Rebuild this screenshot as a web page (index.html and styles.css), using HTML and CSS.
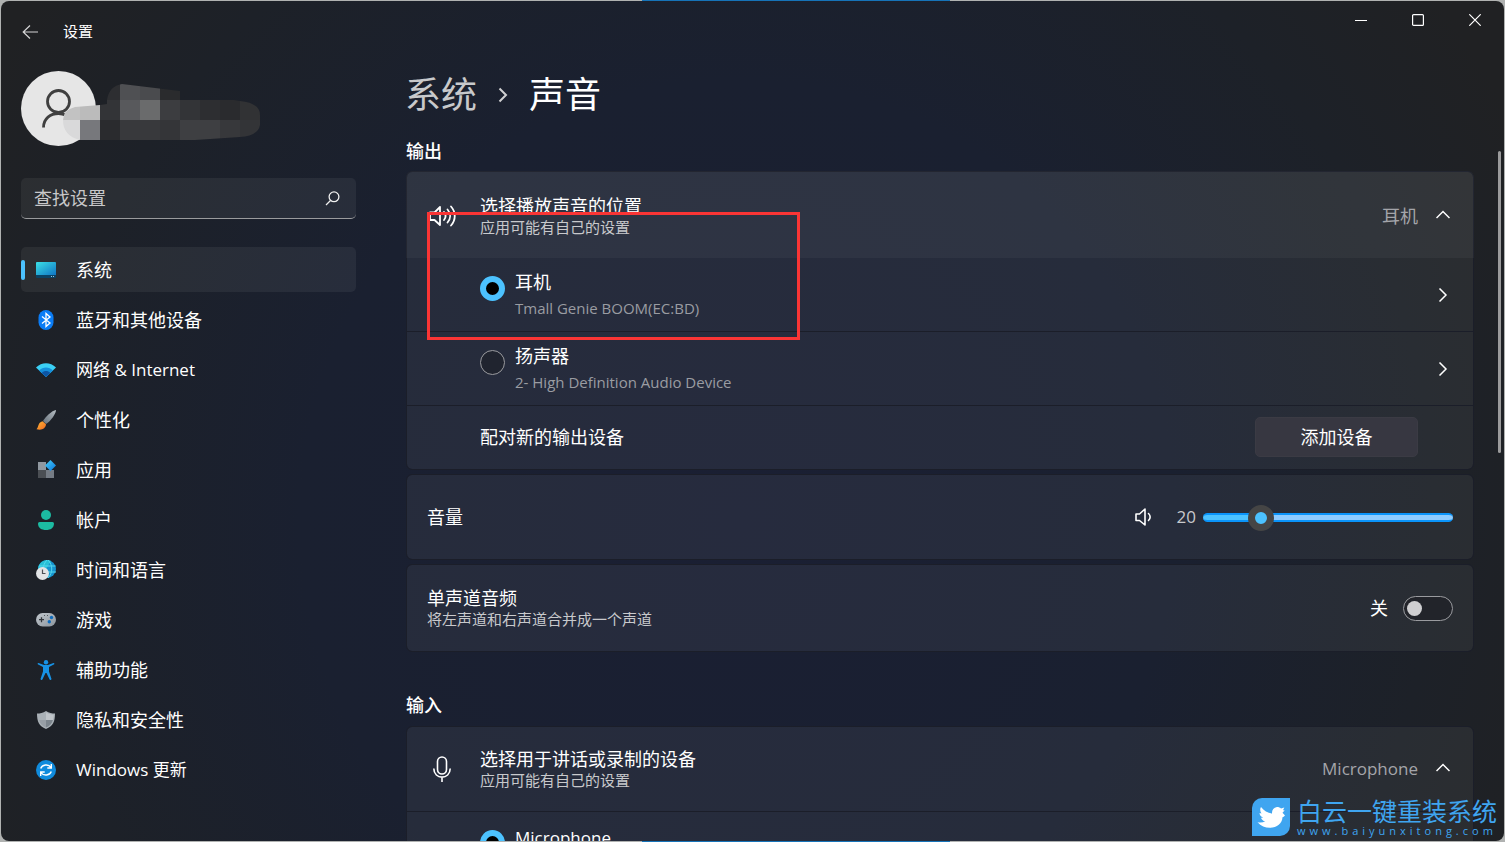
FILE: index.html
```html
<!DOCTYPE html>
<html lang="zh-CN">
<head>
<meta charset="utf-8">
<meta name="viewport" content="width=device-width, initial-scale=1">
<title>设置</title>
<link rel="stylesheet" href="styles.css">
</head>
<body>
<div class="window">
  <header class="titlebar">
    <button class="back" type="button" aria-label="返回">
      <svg width="17" height="16" viewBox="0 0 17 16" fill="none" stroke="#d4d4d5" stroke-width="1.2"><path d="M16 8H1M8 1.5 1.200 8 8 14.500"/></svg>
    </button>
    <span class="app-name">设置</span>
    <div class="controls">
      <button type="button" aria-label="最小化"><svg width="12" height="12" viewBox="0 0 12 12" stroke="#fff"><path d="M0 6.500h12"/></svg></button>
      <button type="button" aria-label="最大化"><svg width="12" height="12" viewBox="0 0 12 12" fill="none" stroke="#fff" stroke-width="1.200"><rect x=".6" y=".6" width="10.800" height="10.800" rx="1"/></svg></button>
      <button type="button" aria-label="关闭"><svg width="12" height="12" viewBox="0 0 12 12" stroke="#fff" stroke-width="1.200"><path d="m.3.3 11.400 11.400M11.700.3.3 11.700"/></svg></button>
    </div>
  </header>

  <div class="layout">
    <aside class="sidebar">
      <div class="user">
        <svg width="240" height="75" viewBox="21 71 240 75">
          <defs><clipPath id="name-mask"><path d="M107 104v-4q2-14 15-16l58 7 60 10q20 2 20 14v10q-2 11-20 12l-45 3H80q-17-4-17-20 0-10 12-13l25-2z"/></clipPath></defs>
          <circle cx="58.500" cy="108.500" r="37.500" fill="#e6e6e6"/>
          <g fill="none" stroke="#3f3f3f" stroke-width="2.800"><circle cx="58.500" cy="101.500" r="11"/><path d="M43.500 127.500c0-9 7-14 15-14 3 0 5 .6 8 2"/></g>
          <g clip-path="url(#name-mask)" shape-rendering="crispEdges">
            <path fill="#2d2e31" d="M100 80h20v20h-20z"/><path fill="#4f5053" d="M120 80h20v20h-20z"/><path fill="#4a4b4e" d="M140 80h20v20h-20z"/><path fill="#2a2b2d" d="M160 80h20v20h-20z"/>
            <path fill="#c2c2c2" d="M60 100h20v20H60z"/><path fill="#bbb" d="M80 100h20v20H80z"/><path fill="#333437" d="M100 100h20v20h-20z"/><path fill="#58595c" d="M120 100h20v20h-20z"/><path fill="#6a6b6c" d="M140 100h20v20h-20z"/><path fill="#3c3d40" d="M160 100h20v20h-20z"/><path fill="#333437" d="M180 100h20v20h-20z"/><path fill="#2d2e31" d="M200 100h20v20h-20z"/><path fill="#2a2b2e" d="M220 100h20v20h-20z"/><path fill="#313234" d="M240 100h20v20h-20z"/>
            <path fill="#d9d9da" d="M60 120h20v20H60z"/><path fill="#77787c" d="M80 120h20v20H80z"/><path fill="#2a2b2e" d="M100 120h20v20h-20z"/><path fill="#38393c" d="M120 120h40v20h-40z"/><path fill="#343538" d="M160 120h20v20h-20z"/><path fill="#3e3f42" d="M180 120h40v20h-40z"/><path fill="#37383b" d="M220 120h20v20h-20z"/><path fill="#333437" d="M240 120h20v20h-20z"/>
          </g>
        </svg>
      </div>

      <label class="search">
        <input type="search" placeholder="查找设置" aria-label="查找设置">
        <svg width="15" height="15" viewBox="0 0 15 15" fill="none" stroke="#f0f0f0" stroke-width="1.300"><circle cx="9" cy="5.800" r="4.900"/><path d="M5.500 9.500 1 14"/></svg>
      </label>

      <nav class="nav">
        <a class="nav-item active" href="#system">
          <svg width="20" height="20" viewBox="0 0 20 20"><defs><linearGradient id="screen" x2="1" y2="1"><stop stop-color="#3be0e6"/><stop offset="1" stop-color="#1075c4"/></linearGradient></defs><rect y="2" width="20" height="16" rx="1" fill="#0b4264"/><path d="M1 2h18a1 1 0 0 1 1 1v12H0V3a1 1 0 0 1 1-1z" fill="url(#screen)"/><path d="M15 16h1v1h-1zm2 0h1v1h-1z" fill="#9cc8df"/></svg>
          系统</a>
        <a class="nav-item" href="#bluetooth">
          <svg width="20" height="20" viewBox="0 0 20 20"><rect x="2.500" width="15" height="20" rx="7.500" fill="#0a7cf5"/><path d="m6 6.500 8 6.500-4 3.500v-13L14 7l-8 6.500" fill="none" stroke="#fff" stroke-width="1.300"/></svg>
          蓝牙和其他设备</a>
        <a class="nav-item latin" href="#network">
          <svg width="20" height="20" viewBox="0 0 20 20"><path d="M10 17 0 7.500C5.500 1.700 14.500 1.700 20 7.500z" fill="#3bd0f5"/><path d="M10 17 3 10.400c4-4 10-4 14 0z" fill="#1590dc"/><path d="m10 17-4.300-4.100c2.500-2.400 6.100-2.400 8.600 0z" fill="#0d55a4"/></svg>
          网络 &amp; Internet</a>
        <a class="nav-item" href="#personalization">
          <svg width="20" height="20" viewBox="0 0 20 20"><defs><linearGradient id="handle" x1="1" x2="0" y2="1"><stop stop-color="#b4bcc2"/><stop offset="1" stop-color="#66717a"/></linearGradient><linearGradient id="bristle" y2="1"><stop stop-color="#ffba38"/><stop offset="1" stop-color="#ef6820"/></linearGradient></defs><path d="M20 0c.3 3-5 11-10 14l-3-3C9 7 16 .5 20 0z" fill="url(#handle)"/><path d="M6.500 11.200 10 14.300c-.3 4-4 6.500-9.500 4.900C3 17 1.500 12.500 6.500 11.200z" fill="url(#bristle)"/></svg>
          个性化</a>
        <a class="nav-item" href="#apps">
          <svg width="20" height="20" viewBox="0 0 20 20"><defs><linearGradient id="tile" x2="1" y2="1"><stop stop-color="#49d0f8"/><stop offset="1" stop-color="#0876dd"/></linearGradient></defs><path fill="#9098a0" d="M2 2h8v8H2z"/><path fill="#4b4f54" d="M2 10h8v8H2z"/><path fill="#757c85" d="M10 10h8v8h-8z"/><path fill="url(#tile)" d="m14.500 0 5.500 5.500-5.500 5.500L9 5.500z"/></svg>
          应用</a>
        <a class="nav-item" href="#accounts">
          <svg width="20" height="20" viewBox="0 0 20 20" fill="#1cbba2"><circle cx="10" cy="5" r="5"/><path d="M3.500 12h13a1.500 1.500 0 0 1 1.500 1.500C18 18 14.500 20 10 20s-8-2-8-6.500A1.500 1.500 0 0 1 3.500 12z"/></svg>
          帐户</a>
        <a class="nav-item" href="#time">
          <svg width="20" height="20" viewBox="0 0 20 20"><circle cx="11" cy="9" r="9" fill="#1694cf"/><path d="M2 9a9 9 0 0 1 13-8L7 14z" fill="#27bfd6"/><path d="M3 6h16.500M3 12h17M11 0c-5 5-5 13 0 18M12 0c5 5 5 13 0 18" fill="none" stroke="#54d8ed"/><circle cx="6.500" cy="13.500" r="6.500" fill="#e1e3e5"/><path d="M6.500 9.500v4h3" fill="none" stroke="#4c5056" stroke-width="1.200"/></svg>
          时间和语言</a>
        <a class="nav-item" href="#gaming">
          <svg width="20" height="20" viewBox="0 0 20 20"><defs><linearGradient id="pad" y2="1"><stop stop-color="#c2c8ce"/><stop offset="1" stop-color="#8b949c"/></linearGradient></defs><rect y="3" width="20" height="13.500" rx="6.700" fill="url(#pad)"/><path d="M3 9.700h5M5.500 7.200v5" stroke="#34383d" stroke-width="1.300"/><path d="M8 5h1v1H8zm3 0h1v1h-1z" fill="#54595f"/><circle cx="15.500" cy="7.500" r="1.700" fill="#0f6cbd"/><circle cx="13.300" cy="11.800" r="1.700" fill="#0f6cbd"/></svg>
          游戏</a>
        <a class="nav-item" href="#accessibility">
          <svg width="20" height="20" viewBox="0 0 20 20" fill="#1792e5"><circle cx="10" cy="2.200" r="2.200"/><path d="M2.500 2.900 8 5h4l5.500-2.100c1-.2 1.200 1.300.3 1.700L13 7v4.500l2.500 7.500c.1 1.100-1.500 1.400-1.900.5L10.500 13h-1L6.400 19.500c-.4.900-2 .6-1.900-.5L7 11.500V7L2.200 4.600c-.9-.4-.7-1.900.3-1.700z"/></svg>
          辅助功能</a>
        <a class="nav-item" href="#privacy">
          <svg width="20" height="20" viewBox="0 0 20 20"><path d="M10 1c3 2 6 2.500 9 2.500 0 8-2 12.500-9 15.500-7-3-9-7.500-9-15.500C4 3.500 7 3 10 1z" fill="#a9b0b6"/><path d="M10 2.500c2.500 1.500 5 2 7.600 2.200 0 2-.2 3.700-.7 5.300H10z" fill="#bfc4c9"/><path d="M10 10h6.900c-1 3.600-3 6-6.900 7.600z" fill="#7c858d"/><path d="M3.100 10H10v7.600C6.100 16 4.100 13.600 3.100 10z" fill="#989fa6"/></svg>
          隐私和安全性</a>
        <a class="nav-item latin" href="#update">
          <svg width="20" height="20" viewBox="0 0 20 20"><circle cx="10" cy="10" r="10" fill="#108bdc"/><path d="M4.700 8.500C6 4.500 12.500 3.500 15 7.500M15.300 4v4h-4M15.300 11.500C14 15.500 7.500 16.500 5 12.500M4.700 16v-4h4" fill="none" stroke="#fff" stroke-width="1.400"/></svg>
          Windows 更新</a>
      </nav>
    </aside>

    <main class="content">
      <h1 class="crumbs">
        <a href="#system">系统</a>
        <svg width="10" height="16" viewBox="0 0 10 16" fill="none" stroke="#d0d0d2" stroke-width="2"><path d="m1.500 1.500 6.500 6.500-6.500 6.500"/></svg>
        <span>声音</span>
      </h1>

      <h2>输出</h2>
      <section class="card">
        <div class="card-head hover">
          <svg class="lead" width="30" height="26" viewBox="0 0 30 26" fill="none" stroke="#fff" stroke-width="1.800" stroke-linejoin="round"><path d="M3 9.500h4.500L13 4v18l-5.500-5H3z"/><path d="M17 9c2 2.500 2 5.500 0 8M20.500 6.500c3.500 4 3.500 9 0 13M24 3.500c5 5.500 5 13.500 0 19" stroke-linecap="round"/></svg>
          <div class="text"><p class="title">选择播放声音的位置</p><p class="sub">应用可能有自己的设置</p></div>
          <span class="value">耳机</span>
          <svg class="chevron" width="14" height="14" viewBox="0 0 14 14"><path d="m.5 9 6.500-6.500 6.500 6.500"/></svg>
        </div>
        <div class="row device">
          <input type="radio" name="output" id="headset" checked>
          <label for="headset" class="text"><span class="title">耳机</span><span class="sub">Tmall Genie BOOM(EC:BD)</span></label>
          <svg class="chevron" width="14" height="14" viewBox="0 0 14 14"><path d="m3.500.5 6.500 6.500-6.500 6.500"/></svg>
        </div>
        <div class="row device">
          <input type="radio" name="output" id="speaker">
          <label for="speaker" class="text"><span class="title">扬声器</span><span class="sub">2- High Definition Audio Device</span></label>
          <svg class="chevron" width="14" height="14" viewBox="0 0 14 14"><path d="m3.500.5 6.500 6.500-6.500 6.500"/></svg>
        </div>
        <div class="row pair">
          <p class="title">配对新的输出设备</p>
          <button class="add" type="button">添加设备</button>
        </div>
      </section>

      <section class="card plain">
        <label class="title" for="volume">音量</label>
        <div class="volume">
          <svg width="20" height="20" viewBox="0 0 20 20" fill="none" stroke="#fff" stroke-width="1.600" stroke-linejoin="round"><path d="M2 7h3.500L11 2v16l-5.500-4.500H2z"/><path d="M14.500 6.500c2.200 2 2.200 5 0 7" stroke-linecap="round"/></svg>
          <output for="volume">20</output>
          <input type="range" id="volume" min="0" max="100" value="20">
        </div>
      </section>

      <section class="card plain">
        <label class="text" for="mono"><span class="title">单声道音频</span><span class="sub">将左声道和右声道合并成一个声道</span></label>
        <div class="switch"><span>关</span><input type="checkbox" id="mono" role="switch"></div>
      </section>

      <h2 class="later">输入</h2>
      <section class="card">
        <div class="card-head">
          <svg class="lead" width="30" height="26" viewBox="0 0 30 26" fill="none" stroke="#fff" stroke-width="1.600"><rect x="10.500" y="1" width="9" height="17" rx="4.500"/><path d="M6.800 12.500c0 11.500 16.400 11.500 16.400 0M15 21v5"/></svg>
          <div class="text"><p class="title">选择用于讲话或录制的设备</p><p class="sub">应用可能有自己的设置</p></div>
          <span class="value latin">Microphone</span>
          <svg class="chevron" width="14" height="14" viewBox="0 0 14 14"><path d="m.5 9 6.500-6.500 6.500 6.500"/></svg>
        </div>
        <div class="row device first-line">
          <input type="radio" name="input" id="mic" checked>
          <label for="mic" class="text"><span class="title latin">Microphone</span></label>
        </div>
      </section>
      <div class="scroll-thumb"></div>
    </main>
  </div>
</div>

<div class="highlight"></div>

<div class="watermark">
  <svg width="38" height="38" viewBox="0 0 38 38"><path d="M10 0h28v28a10 10 0 0 1-10 10H0V10A10 10 0 0 1 10 0z" fill="#3fa5f0"/><path d="M33 17.500c-1 1-1.800 1.600-2.500 1.800C30.200 25.500 25 29.800 18 29.800c-5 0-9-2-12.500-5.600 3 .5 5.500.3 7.800-.9-2.300-.4-3.700-1.700-4.300-3.600h2.200C8.800 18.700 7.700 17 7.500 15l2 .6C8 13.500 7.800 11 9 9c3 3.800 6.500 6 11 6.500-.2-3.500 1.500-6 5-6.500 1.700 0 3 .5 4 1.500l3.300-1-1.300 2.700h1.700l-2.200 2.600z" fill="#fff"/></svg>
  <div class="mark-text"><strong>白云一键重装系统</strong><span>www.baiyunxitong.com</span></div>
</div>
</body>
</html>
```

FILE: styles.css
```css
* { box-sizing: border-box; }

body {
  margin: 0;
  height: 100vh;
  overflow: hidden;
  position: relative;
  padding: 1px;
  background: linear-gradient(to right, #b0b2b1 642px, #1673b8 642px, #1673b8 950px, #b0b2b1 950px);
  color: #fff;
  font: 18px/24px "Open Sans", "Noto Sans CJK SC", sans-serif;
}

h1, h2, p { margin: 0; font-weight: 400; }
a { color: inherit; text-decoration: none; }
button, input { font: inherit; color: inherit; margin: 0; }
svg { flex: none; display: block; }

.window {
  height: 100%;
  overflow: hidden;
  display: flex;
  flex-direction: column;
  border-radius: 8px;
  background: radial-gradient(ellipse 58% 105% at 49% 62%, #1a1f33 0%, #1a2030 50%, #1d2128 80%, #202123 100%);
}

.titlebar { flex: none; display: flex; height: 62px; padding: 0 1px 0 20px; font-size: 15px; }
.titlebar button { display: grid; place-items: center; border: 0; padding: 0; background: none; }
.back { width: 18px; height: 62px; }
.app-name { margin-left: 24px; line-height: 60px; }
.controls { display: flex; margin-left: auto; }
.controls button { width: 57px; height: 38px; }

.layout { flex: 1; min-height: 0; display: flex; gap: 49px; padding-left: 20px; }
.sidebar { flex: none; width: 335px; padding-top: 8px; }

.search {
  display: flex;
  align-items: center;
  height: 41px;
  margin: 32px 0 28px;
  padding: 0 16px 0 13px;
  border-radius: 5px;
  border-bottom: 1px solid #9a9b9d;
  background: rgba(255, 255, 255, .06);
}
.search input { flex: 1; min-width: 0; border: 0; padding: 0; outline: 0; background: none; }
.search input::placeholder { color: #c8c8ca; opacity: 1; }

.nav { display: grid; gap: 5px; }
.nav-item { position: relative; display: flex; align-items: center; gap: 20px; height: 45px; padding-left: 15px; border-radius: 5px; font-size: 18px; }
.nav-item.active { background: rgba(255, 255, 255, .06); }
.nav-item.active::before { content: ""; position: absolute; left: 0; top: 13px; width: 4px; height: 20px; border-radius: 2px; background: #4cc2ff; }

.content { flex: 1; min-width: 0; position: relative; padding: 8px 30px 0 0; }
.crumbs { display: flex; align-items: center; gap: 21px; font-size: 36px; line-height: 48px; }
.crumbs a { color: #c8c9cb; }
h2 { margin: 20px 0 8px 1px; font-size: 18px; font-weight: 500; }
h2.later { margin: 41px 0 9px 1px; }

.card { margin: 0 0 4px 1px; border: 1px solid #1b1e29; border-radius: 6px; background: rgba(255, 255, 255, .055); background-clip: padding-box; }
.card-head { display: flex; align-items: center; height: 84px; padding: 0 23px 0 20px; }
.card-head.hover { height: 87px; margin: -1px -1px 0; padding: 2px 24px 0 21px; border-radius: 6px 6px 0 0; background: rgba(255, 255, 255, .04); }
.lead { margin-right: 23px; }
.text { flex: 1; display: flex; flex-direction: column; }
.title { font-size: 18px; line-height: 22px; }
.sub { font-size: 15px; line-height: 20px; color: #c8c9cc; }
.value { margin-right: 18px; color: #a4a5aa; }
.latin { font-size: 17px; }
.chevron { fill: none; stroke: #fff; stroke-width: 1.5; }

.row { display: flex; align-items: center; padding: 0 23px 0 73px; border-top: 1px solid #1b1e29; }
.device { height: 74px; }
.card-head.hover + .row { height: 73px; border-top: 0; }
.device .title, .device .sub { line-height: 26px; }
.device .sub { color: #9a9ca2; }
.device input {
  appearance: none;
  width: 25px;
  height: 25px;
  margin: 0 10px 12px 0;
  border: 1px solid #9a9b9f;
  border-radius: 50%;
  background: #20242f;
}
.device input:checked { border: 6px solid #4cc2ff; background: #000; }
.first-line .text { padding-bottom: 22px; }
.pair { height: 64px; padding: 0 55px 2px 73px; justify-content: space-between; }
.add { width: 163px; height: 40px; border: 1px solid #3b3b44; border-radius: 5px; background: #373741; }

.plain { display: flex; align-items: center; justify-content: space-between; height: 86px; padding: 0 20px; }
.plain + .plain { height: 88px; }
.volume { display: flex; align-items: center; }
.volume output { margin: 0 7px 0 23px; font-size: 17px; color: #c8c9cc; }
.volume input { appearance: none; width: 250px; height: 26px; background: none; }
.volume input::-webkit-slider-runnable-track {
  height: 9px;
  border: 2px solid #0a94fa;
  border-width: 2px 0;
  border-radius: 5px;
  background: linear-gradient(to right, #4cc2ff 23%, #8fccff 23%);
}
.volume input::-webkit-slider-thumb { appearance: none; width: 26px; height: 26px; margin-top: -10px; border: 7px solid #454545; border-radius: 50%; background: #4cc2ff; }
.switch { display: flex; align-items: center; gap: 15px; }
.switch input { appearance: none; width: 50px; height: 25px; padding: 4px 3px; border: 1px solid #9a9b9f; border-radius: 13px; background: #22242a; }
.switch input::before { content: ""; display: block; width: 15px; height: 15px; border-radius: 50%; background: #cfcfd1; }

.scroll-thumb { position: absolute; top: 88px; right: 3px; width: 3px; height: 302px; border-radius: 2px; background: #9b9b9c; }

.highlight { position: absolute; left: 427px; top: 212px; width: 373px; height: 128px; border: 3px solid #fa3535; }

.watermark { position: absolute; right: 8px; bottom: 5px; display: flex; align-items: center; gap: 7px; color: #3fa5f0; }
.mark-text { display: flex; flex-direction: column; }
.mark-text strong { font-size: 25px; line-height: 28px; font-weight: 400; }
.mark-text span { font-size: 11px; line-height: 12px; letter-spacing: 4px; }
```
